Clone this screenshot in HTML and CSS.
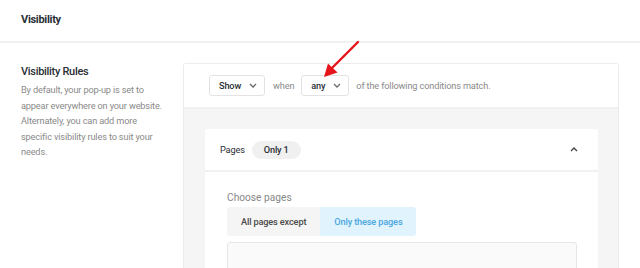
FILE: index.html
```html
<!DOCTYPE html>
<html>
<head>
<meta charset="utf-8">
<link rel="stylesheet" href="styles.css">
</head>
<body>
<header class="top"><h1 class="top-title">Visibility</h1></header>
<section class="row">
  <div class="intro">
    <h2 class="intro-title">Visibility Rules</h2>
    <p class="intro-text">By default, your pop-up is set to<br>appear everywhere on your website.<br>Alternately, you can add more<br>specific visibility rules to suit your<br>needs.</p>
  </div>
  <div class="card">
    <div class="card-bar">
      <div class="select select-show"><span>Show</span><svg class="chev" viewBox="0 0 8 5"><path d="M1 1l3 3 3-3"/></svg></div>
      <span class="muted">when</span>
      <div class="select select-any"><span>any</span><svg class="chev" viewBox="0 0 8 5"><path d="M1 1l3 3 3-3"/></svg></div>
      <span class="muted">of the following conditions match.</span>
    </div>
    <div class="card-body">
      <div class="rule">
        <div class="rule-head">
          <span class="rule-name">Pages</span>
          <span class="pill">Only 1</span>
          <svg class="chev-up" viewBox="0 0 8 5"><path d="M1 4l3-3 3 3"/></svg>
        </div>
        <div class="rule-body">
          <div class="label">Choose pages</div>
          <div class="tabs">
            <span class="tab">All pages except</span>
            <span class="tab tab-active">Only these pages</span>
          </div>
          <div class="input"></div>
        </div>
      </div>
    </div>
  </div>
</section>
<svg class="arrow" viewBox="0 0 640 268" width="640" height="268">
  <path d="M358 42 L331 69" stroke="#e6141b" stroke-width="2.4" stroke-linecap="round" fill="none"/>
  <path d="M324 77 L328 63.5 L337.5 72.5 Z" fill="#e6141b"/>
</svg>
</body>
</html>
```
FILE: styles.css
```css
* { box-sizing: border-box; }
html, body { margin: 0; padding: 0; background: #fff; }
body {
  font-family: Roboto, "Noto Sans", "Liberation Sans", sans-serif;
  color: #23282d;
  width: 640px;
  height: 268px;
  overflow: hidden;
  position: relative;
  font-size: 9.2px;
  letter-spacing: -0.15px;
}
.top {
  height: 43px;
  border-bottom: 2px solid #f1f1f1;
  padding-left: 21px;
  display: flex;
  align-items: center;
}
.top-title {
  margin: 0;
  font-size: 11px;
  letter-spacing: -0.3px;
  font-weight: 700;
  color: #2a2f35;
  position: relative;
  top: -1px;
}
.row {
  display: flex;
  height: 225px;
  padding: 20px 21px 0 21px;
}
.intro {
  width: 162px;
  flex: none;
}
.intro-title {
  margin: 1px 0 0;
  font-size: 11px;
  letter-spacing: -0.3px;
  font-weight: 500;
  line-height: 15px;
  color: #2a2f35;
}
.intro-text {
  margin: 3px 0 0;
  line-height: 15.6px;
  color: #8a8a8a;
}
.card {
  width: 436px;
  border: 1px solid #ececec;
  border-radius: 3px;
  height: 240px;
  flex: none;
}
.card-bar {
  height: 45px;
  border-bottom: 2px solid #f0f0f0;
  display: flex;
  align-items: center;
  padding-left: 25px;
  background: #fff;
}
.select {
  height: 21px;
  border: 1px solid #e3e3e3;
  border-radius: 3px;
  display: flex;
  align-items: center;
  justify-content: space-between;
  padding: 0 7px 0 9px;
  color: #2a2f35;
  font-weight: 500;
  background: #fff;
}
.select-show { width: 56px; margin-right: 8px; }
.select-any { width: 48px; margin: 0 7px; }
.chev { width: 8px; height: 5px; }
.chev path, .chev-up path { fill: none; stroke: #6b6b6b; stroke-width: 1.3; }
.muted { color: #8a8a8a; }
.card-body {
  background: #f5f5f5;
  padding: 20px 20px 0 21px;
  height: 193px;
}
.rule {
  background: #fff;
  border-radius: 3px;
  height: 173px;
}
.rule-head {
  height: 43px;
  border-bottom: 2px solid #f1f1f1;
  display: flex;
  align-items: center;
  padding: 0 20px 0 15px;
}
.rule-name { color: #2a2f35; margin-right: 7px; }
.pill {
  background: #f0f0f0;
  border-radius: 10px;
  height: 18px;
  padding: 0 12px;
  display: flex;
  align-items: center;
  font-weight: 500;
  color: #2a2f35;
}
.chev-up { width: 8px; height: 5px; margin-left: auto; }
.chev-up path { stroke: #444; stroke-width: 1.4; }
.rule-body {
  padding: 19px 21px 0 22px;
}
.label {
  font-size: 10.2px;
  letter-spacing: 0;
  color: #888;
  line-height: 14px;
}
.tabs {
  display: flex;
  margin-top: 2px;
  height: 29px;
}
.tab {
  display: flex;
  align-items: center;
  padding: 0 14px;
  background: #f5f5f5;
  font-weight: 500;
  color: #4a4a4a;
  border-radius: 3px 0 0 3px;
}
.tab-active {
  background: #e1f3fd;
  color: #4aa7e0;
  border-radius: 0 3px 3px 0;
}
.input {
  margin-top: 6px;
  height: 60px;
  border: 1px solid #e6e6e6;
  border-radius: 3px;
  background: #fafafa;
}
.arrow {
  position: absolute;
  left: 0;
  top: 0;
  pointer-events: none;
}
```
